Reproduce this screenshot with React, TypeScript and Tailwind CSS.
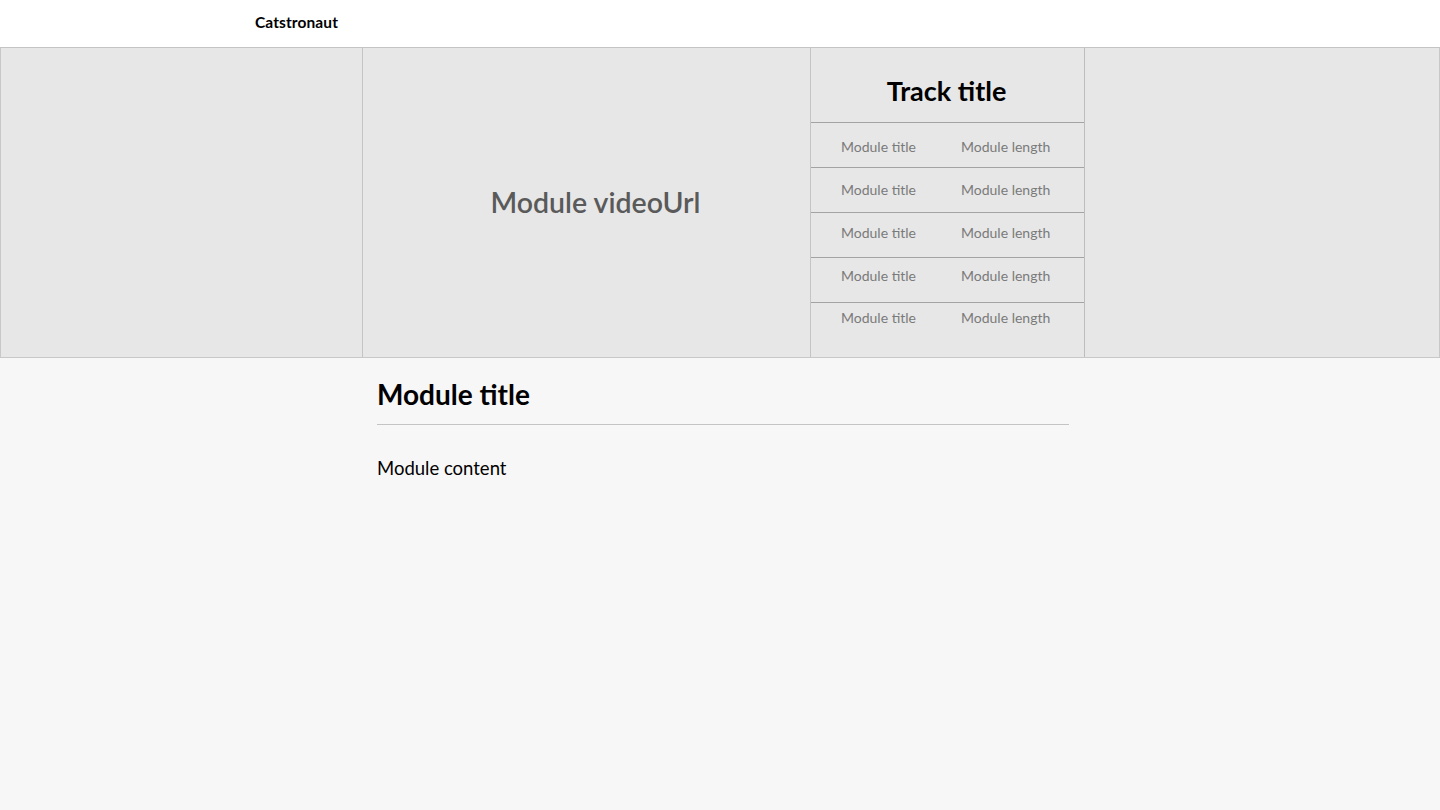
const font = { fontFamily: "Lato, 'Noto Sans', sans-serif" };

const modules = [1, 2, 3, 4, 5];
const rowPad = ["pt-[13px]", "pt-[11px]", "pt-[9px]", "pt-[7px]", "pt-[4px]"];

function Header() {
  return (
    <header className="flex h-[48px] items-center border-b border-[#c4c4c4] bg-white pl-[255px]">
      <span className="pb-[2px] text-[15.5px] font-bold tracking-[0.1px] text-black">Catstronaut</span>
    </header>
  );
}

function TrackList() {
  return (
    <div className="flex w-[274px] flex-col border-r border-[#bdbdbd]">
      <div className="flex h-[75px] items-center justify-center border-b border-[#a3a3a3]">
        <h2 className="pt-[12px] pr-[2px] text-[27px] font-bold text-black">Track title</h2>
      </div>
      {modules.map((m, i) => (
        <div
          key={m}
          className={`flex items-start gap-[44px] pl-[30px] text-[14px] text-[#7a7a7a] ${rowPad[i]} ${
            i < modules.length - 1 ? "h-[45px] border-b border-[#a3a3a3]" : "flex-1"
          }`}
        >
          <span className="w-[76px]">Module title</span>
          <span>Module length</span>
        </div>
      ))}
    </div>
  );
}

export default function App() {
  return (
    <div className="min-h-[810px] bg-[#f7f7f7]" style={font}>
      <Header />
      <div className="flex h-[310px] border-x border-b border-[#c8c8c8] bg-[#e7e7e7]">
        <div className="w-[362px] border-r border-[#c4c4c4]" />
        <div className="flex w-[448px] items-center justify-center border-r border-[#c4c4c4] pl-[18px]">
          <span className="text-[28.5px] font-semibold text-[#5a5a5a]">Module videoUrl</span>
        </div>
        <TrackList />
        <div className="flex-1" />
      </div>
      <div className="ml-[362px] w-[722px] px-[15px]">
        <h1 className="pt-[18px] pb-[12px] text-[28px] font-bold leading-[36px] text-black">Module title</h1>
        <hr className="border-t-[1.5px] border-[#c4c4c4]" />
        <p className="pt-[30px] text-[18.5px] text-black">Module content</p>
      </div>
    </div>
  );
}
